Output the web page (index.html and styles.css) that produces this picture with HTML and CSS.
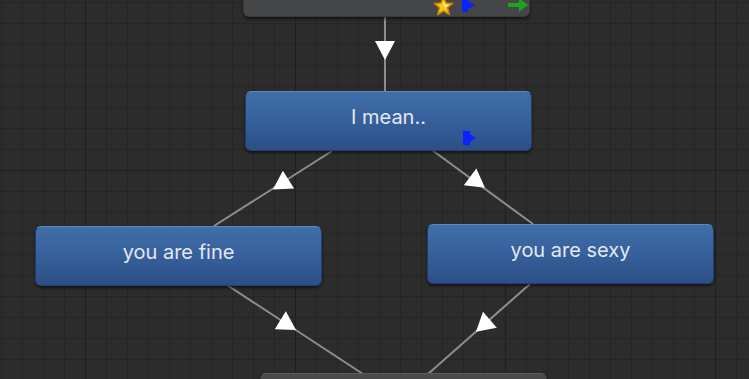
FILE: index.html
```html
<!DOCTYPE html>
<html lang="en">
<head>
  <meta charset="UTF-8">
  <meta name="viewport" content="width=device-width, initial-scale=1.0">
  <title>Animator</title>
  <link rel="stylesheet" href="styles.css">
</head>
<body>
  <div class="graph">

    <!-- transitions -->
    <svg class="links" width="749" height="379" viewBox="0 0 749 379">
      <g class="link-lines">
        <line x1="385" y1="17" x2="385" y2="91"/>
        <line x1="332" y1="151" x2="214" y2="226"/>
        <line x1="432" y1="150" x2="533" y2="224"/>
        <line x1="227" y1="285" x2="363" y2="374"/>
        <line x1="530" y1="284" x2="428" y2="374"/>
      </g>
      <g class="link-arrows">
        <polygon points="12,0 -7,-10 -7,10" transform="translate(385 48) rotate(90)"/>
        <polygon points="12,0 -6.5,-10.5 -6.5,10.5" transform="translate(283 183) rotate(147.8)"/>
        <polygon points="12,0 -6.5,-10.5 -6.5,10.5" transform="translate(475.3 180.7) rotate(36.5)"/>
        <polygon points="12,0 -6.5,-10.5 -6.5,10.5" transform="translate(285.8 323.7) rotate(32)"/>
        <polygon points="12,0 -6.5,-10.5 -6.5,10.5" transform="translate(485 324) rotate(139)"/>
      </g>
    </svg>

    <!-- states -->
    <div class="state state--gray state-entry">
      <span class="state-name"></span>
      <svg class="icon icon-star" width="21" height="20" viewBox="0 0 21 20">
        <polygon points="10.5,1 13.1,7 19.7,7.4 14.6,11.6 16.3,18.5 10.5,14.8 4.7,18.5 6.4,11.6 1.3,7.4 7.9,7" fill="#f7c520" stroke="#c98500" stroke-width="1.5" stroke-linejoin="round"/>
        <polygon points="10.5,4 12.2,8.5 16,8.8 12.8,11.4 10.5,10.2" fill="#fde98a"/>
      </svg>
      <svg class="icon icon-flag" width="14" height="15" viewBox="0 0 14 15">
        <polygon points="0,0 6,0 6,3 13,7 6,11 6,14 0,14" fill="#0a22ff"/>
      </svg>
      <svg class="icon icon-go" width="22" height="14" viewBox="0 0 22 14">
        <polygon points="1,5 12,5 12,0 21,7 12,14 12,9 1,9" fill="#19a51c"/>
      </svg>
    </div>

    <div class="state state--blue state-mean">
      <span class="state-name">I mean..</span>
      <svg class="icon icon-flag" width="14" height="15" viewBox="0 0 14 15">
        <polygon points="0,0 7,0 7,3 13,7 7,11 7,14 0,14" fill="#0a22ff"/>
      </svg>
    </div>

    <div class="state state--blue state-fine">
      <span class="state-name">you are fine</span>
    </div>

    <div class="state state--blue state-sexy">
      <span class="state-name">you are sexy</span>
    </div>

    <div class="state state--gray state-exit">
      <span class="state-name"></span>
    </div>

  </div>
</body>
</html>
```

FILE: styles.css
```css
html, body {
  margin: 0;
  padding: 0;
  overflow: hidden;
}

.graph {
  position: relative;
  width: 749px;
  height: 379px;
  overflow: hidden;
  background-color: #2c2c2c;
  background-image:
    linear-gradient(to right, #1f1f1f 1px, transparent 1px),
    linear-gradient(to bottom, #1f1f1f 1px, transparent 1px),
    linear-gradient(to right, #252525 1px, transparent 1px),
    linear-gradient(to bottom, #252525 1px, transparent 1px);
  background-size: 210px 210px, 210px 210px, 21px 21px, 21px 21px;
  background-position: 85px 170px, 85px 170px, 1px 2px, 1px 2px;
  font-family: Inter, "Noto Sans", sans-serif;
}

.links {
  position: absolute;
  left: 0;
  top: 0;
}

.link-lines line {
  stroke: #8d8d8d;
  stroke-width: 2;
}

.link-arrows polygon {
  fill: #ffffff;
}

/* state nodes */
.state {
  position: absolute;
  box-sizing: border-box;
  width: 287px;
  height: 60px;
  padding-top: 13px;
  border-radius: 6px;
  text-align: center;
  box-shadow: 0 2px 3px rgba(0, 0, 0, 0.55);
}

.state--blue {
  background: linear-gradient(to bottom, #3f6ea8 0%, #36609b 50%, #2d4e87 100%);
  border: 1px solid #223f6e;
  border-top-color: #5a88c0;
}

.state--gray {
  background: linear-gradient(to bottom, #4a4b4c, #444546);
  border: 1px solid #3a3a3a;
  border-top-color: #5b5c5d;
}

.state-name {
  display: block;
  font-size: 20px;
  line-height: 24px;
  color: #e3e8ef;
}

.state-entry { left: 243px; top: -43px; }
.state-mean  { left: 245px; top: 91px; }
.state-fine  { left: 35px;  top: 226px; }
.state-sexy  { left: 427px; top: 224px; }
.state-exit  { left: 260px; top: 373px; }

.icon {
  position: absolute;
}

.state-entry .icon-star { left: 189px; top: 38px; }
.state-entry .icon-flag { left: 218px; top: 40px; }
.state-entry .icon-go   { left: 263px; top: 40px; }

.state-mean .icon-flag  { left: 217px; top: 39px; }
```
